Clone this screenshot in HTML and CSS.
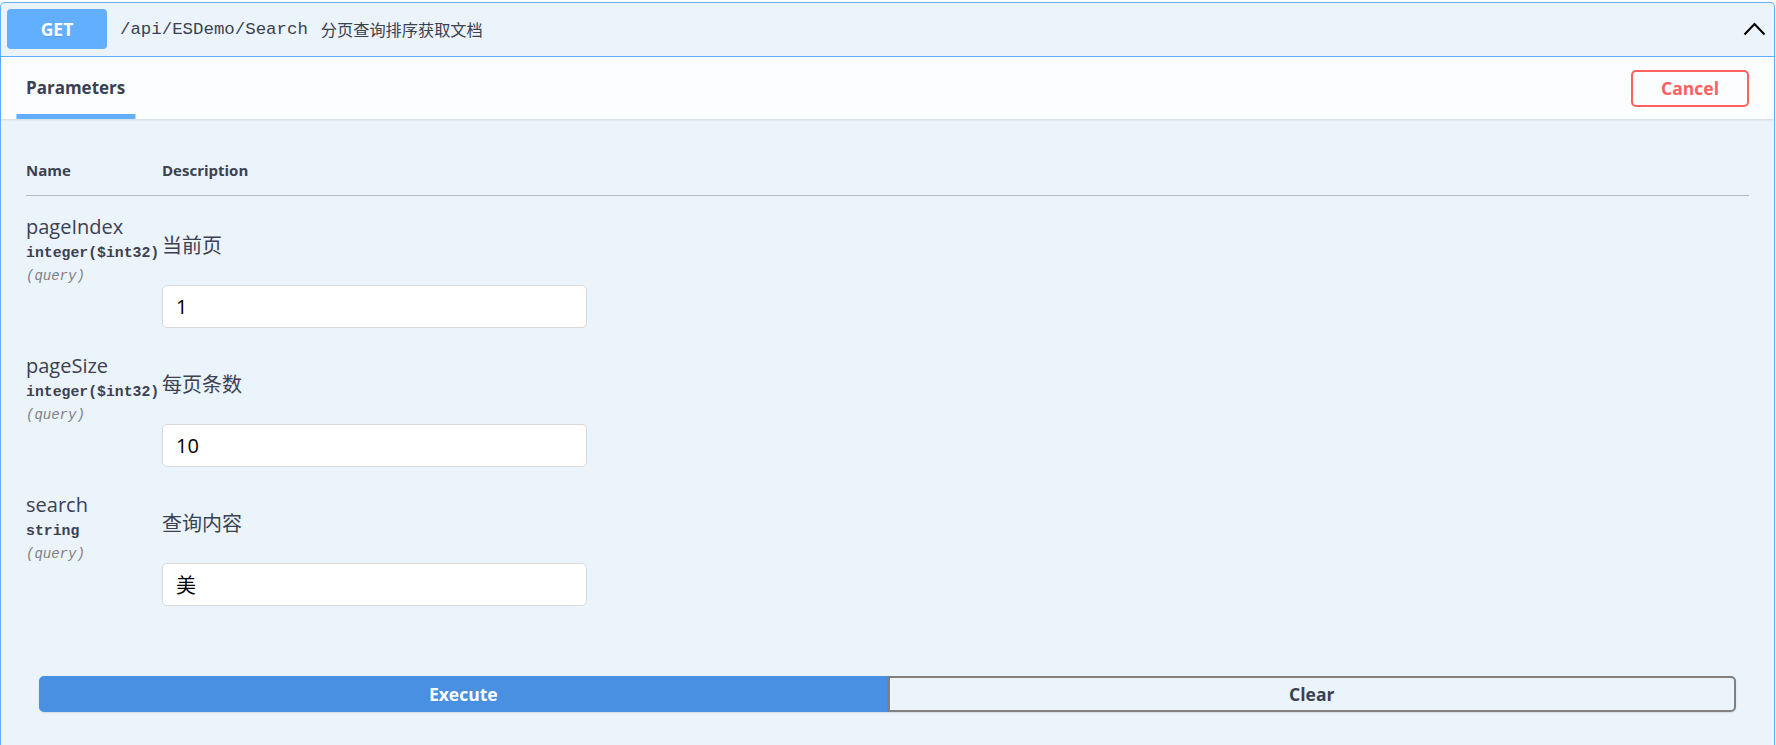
FILE: index.html
```html
<!DOCTYPE html>
<html lang="zh">
<head>
<meta charset="utf-8">
<title>ESDemo Search</title>
<link rel="stylesheet" href="styles.css">
</head>
<body>
<div class="page">
  <div class="opblock">
    <div class="summary">
      <span class="method">GET</span>
      <span class="path">/api/ESDemo/Search</span>
      <span class="summary-desc">分页查询排序获取文档</span>
      <svg class="arrow" width="23" height="14" viewBox="0 0 23 14"><polyline points="1.5,12.5 11.5,2 21.5,12.5" fill="none" stroke="#000" stroke-width="2"/></svg>
    </div>
    <div class="section-header">
      <h4 class="tab"><span>Parameters</span></h4>
      <button class="btn-cancel">Cancel</button>
    </div>
    <div class="table-container">
      <div class="thead">
        <div>Name</div>
        <div>Description</div>
      </div>
      <div class="row">
        <div class="col-name">
          <div class="param-name">pageIndex</div>
          <div class="param-type">integer($int32)</div>
          <div class="param-in">(query)</div>
        </div>
        <div class="col-desc">
          <p class="desc-text">当前页</p>
          <input class="param-input" type="text" value="1">
        </div>
      </div>
      <div class="row">
        <div class="col-name">
          <div class="param-name">pageSize</div>
          <div class="param-type">integer($int32)</div>
          <div class="param-in">(query)</div>
        </div>
        <div class="col-desc">
          <p class="desc-text">每页条数</p>
          <input class="param-input" type="text" value="10">
        </div>
      </div>
      <div class="row">
        <div class="col-name">
          <div class="param-name">search</div>
          <div class="param-type">string</div>
          <div class="param-in">(query)</div>
        </div>
        <div class="col-desc">
          <p class="desc-text">查询内容</p>
          <input class="param-input" type="text" value="美">
        </div>
      </div>
    </div>
    <div class="execute-wrapper">
      <button class="btn-execute">Execute</button>
      <button class="btn-clear">Clear</button>
    </div>
  </div>
</div>
</body>
</html>
```
FILE: styles.css
```css
html, body {
  margin: 0;
  padding: 0;
  background: #ffffff;
  overflow: hidden;
}

.page {
  padding-top: 2px;
  height: 743px;
}

.opblock {
  box-sizing: border-box;
  width: 1775px;
  height: 800px;
  border: 1px solid #61affe;
  border-bottom: none;
  border-radius: 5px 5px 0 0;
  background: #ebf3fb;
  font-family: "Open Sans", "Noto Sans CJK SC", sans-serif;
  color: #3b4151;
}

.summary {
  display: flex;
  align-items: center;
  padding: 6px 8px 7px 6px;
  border-bottom: 1px solid #61affe;
}

.method {
  box-sizing: border-box;
  width: 100px;
  height: 40px;
  line-height: 40px;
  text-align: center;
  background: #61affe;
  border-radius: 4px;
  color: #ffffff;
  font-family: "Open Sans", sans-serif;
  font-weight: 700;
  font-size: 17.5px;
  text-shadow: 0 1px 0 rgba(0, 0, 0, 0.1);
}

.path {
  margin-left: 13px;
  font-family: "Liberation Mono", "Noto Sans CJK SC", monospace;
  font-size: 17.4px;
  color: #3b4151;
}

.summary-desc {
  margin-left: 13px;
  font-family: "Noto Sans CJK SC", sans-serif;
  font-size: 16.2px;
  color: #3b4151;
}

.arrow {
  margin-left: auto;
  display: block;
}

.section-header {
  position: relative;
  box-sizing: border-box;
  height: 62px;
  display: flex;
  align-items: center;
  justify-content: space-between;
  padding: 0 25px;
  background: rgba(255, 255, 255, 0.8);
  box-shadow: 0 1px 2px rgba(0, 0, 0, 0.1);
}

.tab {
  margin: 0;
  font-size: 17px;
  line-height: 22px;
  font-weight: 700;
  color: #3b4151;
}

.tab span {
  position: relative;
  display: inline-block;
}

.tab span::after {
  content: "";
  position: absolute;
  left: 50%;
  bottom: -20px;
  width: 120%;
  height: 5px;
  transform: translateX(-50%);
  background: #61affe;
}

.btn-cancel {
  box-sizing: border-box;
  height: 37px;
  padding: 0 28px;
  border: 2px solid #ff6060;
  border-radius: 5px;
  background: transparent;
  color: #ff6060;
  font-family: "Open Sans", sans-serif;
  font-weight: 700;
  font-size: 17.5px;
  line-height: 33px;
}

.table-container {
  padding: 25px 25px;
}

.thead {
  display: grid;
  grid-template-columns: 136px 1fr;
  padding: 17px 0 15px;
  font-size: 15px;
  line-height: 19px;
  font-weight: 700;
  border-bottom: 1px solid #b3bac5;
}

.row {
  display: grid;
  grid-template-columns: 136px 1fr;
  height: 139px;
}

.col-name {
  padding-top: 18px;
}

.param-name {
  font-size: 20px;
  line-height: 25px;
  color: #3b4151;
}

.param-type {
  margin-top: 6px;
  font-family: "Liberation Mono", monospace;
  font-weight: 700;
  font-size: 14.8px;
  line-height: 17px;
  color: #3b4151;
  white-space: nowrap;
}

.param-in {
  margin-top: 6px;
  font-family: "Liberation Mono", monospace;
  font-style: italic;
  font-size: 14px;
  line-height: 17px;
  color: #808080;
}

.col-desc {
  display: flex;
  flex-direction: column;
  align-items: flex-start;
}

.desc-text {
  margin: 36px 0 0;
  font-family: "Noto Sans CJK SC", sans-serif;
  font-size: 20px;
  line-height: 25px;
  color: #3b4151;
}

.param-input {
  box-sizing: border-box;
  width: 425px;
  height: 43px;
  margin: 28px 0 0;
  padding: 0 13px;
  border: 1px solid #d9d9d9;
  border-radius: 5px;
  background: #ffffff;
  font-family: "Open Sans", "Noto Sans CJK SC", sans-serif;
  font-size: 20px;
  color: #000000;
  outline: none;
}

.execute-wrapper {
  display: flex;
  padding: 38px 38px 0;
}

.btn-execute,
.btn-clear {
  flex: 1;
  box-sizing: border-box;
  height: 36px;
  font-family: "Open Sans", sans-serif;
  font-weight: 700;
  font-size: 17.5px;
  line-height: 32px;
  padding: 0;
  box-shadow: 0 1px 2px rgba(0, 0, 0, 0.1);
}

.btn-execute {
  background: #4990e2;
  border: 2px solid #4990e2;
  border-radius: 5px 0 0 5px;
  color: #ffffff;
}

.btn-clear {
  background: transparent;
  border: 2px solid #808080;
  border-radius: 0 5px 5px 0;
  color: #3b4151;
}
```
